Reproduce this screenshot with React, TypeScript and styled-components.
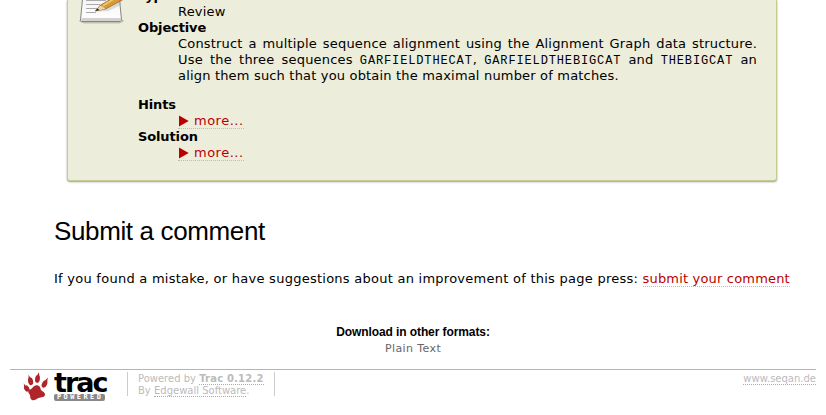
import React from 'react';
import styled, { createGlobalStyle } from 'styled-components';

const Global = createGlobalStyle`
  * { box-sizing: border-box; }
  body { margin: 0; background: #fff; color: #000; font: 13px/16px Verdana, "DejaVu Sans", sans-serif; }
`;
const Page = styled.div`
  height: 415px;
  overflow: hidden;
`;
const Panel = styled.section`
  display: flex;
  width: 710px;
  height: 181px;
  margin-left: 67px;
  padding-left: 10px;
  background: #ecedda;
  border: solid #c6cb93;
  border-width: 0 1px 1px;
  border-radius: 0 0 3px 3px;
  box-shadow: 0 1px 2px #999;
`;
const Details = styled.dl`
  margin: -12px 0 0 12px;
  width: 619px;
`;
const Term = styled.dt`
  font-weight: bold;
  letter-spacing: -0.13px;
`;
const Description = styled.dd<{ $gap?: number }>`
  margin: 0 0 ${p => p.$gap ?? 0}px 40px;
`;
const Line = styled.div<{ $spacing?: number; $justify?: boolean }>`
  height: 16px;
  white-space: nowrap;
  letter-spacing: ${p => p.$spacing ?? 0.18}px;
  text-align-last: ${p => (p.$justify ? 'justify' : 'left')};
`;
const Code = styled.code`
  font: 12px/12px "Courier New", "Liberation Mono", monospace;
  letter-spacing: 0.86px;
`;
const Link = styled.a<{ $spacing?: number }>`
  color: #b00;
  border-bottom: 1px dotted #bbb;
  letter-spacing: ${p => p.$spacing ?? 0.18}px;
`;
const More = styled(Link)`
  display: inline-flex;
  align-items: center;
  height: 16px;
  width: 66px;
  gap: 5px;
`;
const Comment = styled.section`
  margin: 34px 0 0 54px;
`;
const Heading = styled.h1`
  margin: 0 0 24px;
  font: 26px/32px "Liberation Sans", Arial, sans-serif;
  letter-spacing: -0.37px;
`;
const Formats = styled.section`
  margin-top: 37px;
  text-align: center;
  font-size: 11px;
  color: #666;
`;
const FormatsTitle = styled.h2`
  margin: 0 0 1px;
  color: #000;
  font: bold 12px/16px "Liberation Sans", Arial, sans-serif;
  letter-spacing: -0.09px;
`;
const Format = styled.span`
  letter-spacing: 0.4px;
`;
const Footer = styled.footer`
  display: flex;
  align-items: flex-start;
  margin: 12px 10px 0;
  padding-top: 2px;
  border-top: 1px solid #b5b5b5;
  color: #bbb;
  font-size: 10px;
  line-height: 12px;
`;
const Logo = styled.div`
  display: flex;
  flex: none;
  width: 117px;
  height: 30px;
  padding-left: 13px;
`;
const Wordmark = styled.div`
  width: 53px;
  margin-left: 5px;
  color: #000;
`;
const Trac = styled.div`
  height: 22px;
  font: bold 27px/22px "DejaVu Sans", sans-serif;
  letter-spacing: -2px;
`;
const Powered = styled.div`
  width: 51px;
  height: 7px;
  padding-left: 3px;
  border-radius: 2px;
  background: #888;
  color: #fff;
  font: bold 7px/7px "DejaVu Sans Mono", monospace;
  letter-spacing: 2.4px;
  white-space: nowrap;
`;
const Credits = styled.div`
  height: 24px;
  width: 148px;
  padding: 1px 0 0 10px;
  border: solid #ccc;
  border-width: 0 1px;
  white-space: nowrap;
`;
const FooterLink = styled.a<{ $spacing?: number }>`
  border-bottom: 1px dotted #aaa;
  letter-spacing: ${p => p.$spacing ?? 0}px;
`;
const Site = styled.div`
  margin: 1px 0 0 auto;
`;

const Notepad = () => (
  <svg width="48" height="25" viewBox="0 0 48 25">
    <defs>
      <linearGradient id="paper" x2="0" y2="1"><stop stopColor="#f4f4f4" /><stop offset="1" stopColor="#fff" /></linearGradient>
    </defs>
    <path d="M1 20h45l-1 2-4 1.500H6L2 22z" fill="#a3a38c" opacity=".6" />
    <path d="M4.500-1h37l2 21-1 1.500H3.500l-1-1.500z" fill="url(#paper)" stroke="#858585" />
    <path d="M3.500 18h39.500v3H3.500z" fill="#d2d2d2" />
    <path d="M8 .5h20M8 4.500h14M8 8.500h11M8 12.500h10" stroke="#aaa" />
    <path d="M18 11.500l10-2.500L43 1v4l-13 6z" fill="#aaa" opacity=".4" />
    <path d="M17.500 11l4.500-5.500L33-1h13L27.500 9z" fill="#d99a36" stroke="#94652a" strokeWidth=".8" />
    <path d="M18 10.800l4.200-5 2.300.7 2.800 2.500z" fill="#ead4a8" />
    <path d="M17 11.300l2.500-2.800 1.800 1.600z" fill="#222" />
    <path d="M25 5.500L36-1" stroke="#f3ca78" strokeWidth="1.500" />
    <path d="M40-1h6l-4 2z" fill="#c66c68" />
  </svg>
);
const Paw = () => (
  <svg width="26" height="30" viewBox="0 0 26 30" fill="#b0252a">
    <ellipse cx="3.700" cy="16.500" rx="2.400" ry="3.300" transform="rotate(-30 3.700 16.500)" />
    <ellipse cx="7.600" cy="9.300" rx="2.500" ry="3.900" transform="rotate(-12 7.600 9.300)" />
    <ellipse cx="14.500" cy="7" rx="2.400" ry="3.900" transform="rotate(8 14.500 7)" />
    <ellipse cx="21.500" cy="12" rx="2.500" ry="3.900" transform="rotate(25 21.500 12)" />
    <path d="M.7 11.200l2.300 3.300-1.700 1zM5.500 2.800l2.700 4.200-2.500.8zM15.800.3l.8 4.500-3-.3zM24.800 5.600l-.6 4.600-2.500-1.200z" />
    <path d="M12.500 13.500c3-.8 5 1.200 5.200 3.700.2 2 4.300 2.300 4.300 5.300 0 3.200-4 2.300-6.500 3.500-2.600 1.300-4.500 3.200-6.800 1.700-2.200-1.400-.8-4.300-2.200-5.500-1.400-1.400-2-4 .5-4.700 2.500-.8 2.800-3.300 5.500-4z" />
  </svg>
);
const Arrow = () => (
  <svg width="11" height="12" viewBox="0 0 11 12"><path d="M1 .5v11L10.700 6z" fill="#b00" /></svg>
);

export default function App() {
  return (
    <Page>
      <Global />
      <Panel>
        <Notepad />
        <Details>
          <Term>Type</Term>
          <Description><Line>Review</Line></Description>
          <Term>Objective</Term>
          <Description $gap={13}>
            <Line $justify>Construct a multiple sequence alignment using the Alignment Graph data structure.</Line>
            <Line $justify>Use the three sequences <Code>GARFIELDTHECAT</Code>, <Code>GARFIELDTHEBIGCAT</Code> and <Code>THEBIGCAT</Code> an</Line>
            <Line>align them such that you obtain the maximal number of matches.</Line>
          </Description>
          <Term>Hints</Term>
          <Description><Line><More $spacing={0.5}><Arrow />more...</More></Line></Description>
          <Term>Solution</Term>
          <Description><Line><More $spacing={0.5}><Arrow />more...</More></Line></Description>
        </Details>
      </Panel>
      <Comment>
        <Heading>Submit a comment</Heading>
        <Line $spacing={0.255}>If you found a mistake, or have suggestions about an improvement of this page press: <Link>submit your comment</Link></Line>
      </Comment>
      <Formats>
        <FormatsTitle>Download in other formats:</FormatsTitle>
        <Format>Plain Text</Format>
      </Formats>
      <Footer>
        <Logo><Paw /><Wordmark><Trac>trac</Trac><Powered>POWERED</Powered></Wordmark></Logo>
        <Credits>
          Powered by <FooterLink $spacing={0.2}><b>Trac 0.12.2</b></FooterLink><br />
          By <FooterLink>Edgewall Software</FooterLink>.
        </Credits>
        <Site><FooterLink>www.seqan.de</FooterLink></Site>
      </Footer>
    </Page>
  );
}
